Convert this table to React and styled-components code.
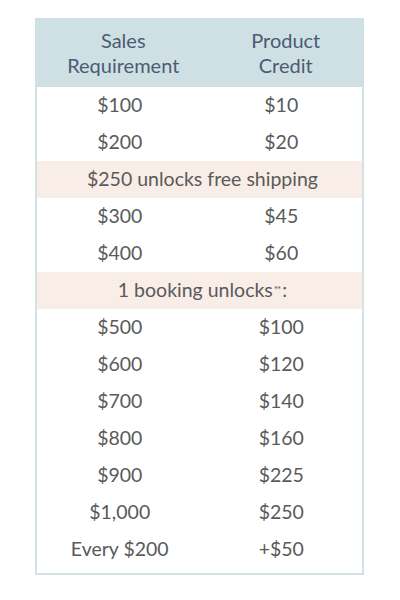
import React from 'react'
import styled, { createGlobalStyle } from 'styled-components'

const GlobalStyle = createGlobalStyle`
    body {
        margin: 0;
        background: #ffffff;
        font-family: Lato, "Open Sans", sans-serif;
    }
`;

const Page = styled.div`
    padding: 18px 36px 0 35px;
`;

const Table = styled.div`
    border: 2px solid #d3e2e7;
    border-top: none;
    padding-bottom: 5px;
`;

const Header = styled.div`
    display: grid;
    grid-template-columns: 1fr 1fr;
    column-gap: 6px;
    background-color: #cfe0e5;
    height: 69px;
    align-items: center;
    padding-left: 10px;
    margin: 0 -2px;
`;

const HeadCell = styled.div`
    text-align: center;
    color: #4b5b72;
    font-size: 20px;
    line-height: 25px;
`;

const Row = styled.div`
    display: grid;
    grid-template-columns: 1fr 1fr;
    height: 37px;
    align-items: center;
    padding-left: 2px;
`;

const Cell = styled.div`
    text-align: center;
    color: #5a5a5a;
    font-size: 19.5px;
    padding-bottom: 3px;
`;

const Band = styled.div`
    height: 37px;
    display: flex;
    align-items: center;
    justify-content: center;
    padding: 0 0 3px 6px;
    box-sizing: border-box;
    background-color: #f8ede7;
    color: #5a5a5a;
    font-size: 19.5px;
`;

const Sup = styled.sup`
    font-size: 10px;
    vertical-align: 9px;
    margin: 0 2px 0 1px;
    letter-spacing: -1px;
`;

const tiers1 = [['$100', '$10'], ['$200', '$20']];
const tiers2 = [['$300', '$45'], ['$400', '$60']];
const tiers3 = [
    ['$500', '$100'],
    ['$600', '$120'],
    ['$700', '$140'],
    ['$800', '$160'],
    ['$900', '$225'],
    ['$1,000', '$250'],
    ['Every $200', '+$50'],
];

const Rows = ({ items }) =>
    items.map(([a, b]) => (
        <Row key={a}>
            <Cell>{a}</Cell>
            <Cell>{b}</Cell>
        </Row>
    ));

const App = () => {
    return (
        <Page>
            <GlobalStyle />
            <Table>
                <Header>
                    <HeadCell>Sales<br />Requirement</HeadCell>
                    <HeadCell>Product<br />Credit</HeadCell>
                </Header>
                <Rows items={tiers1} />
                <Band>$250 unlocks free shipping</Band>
                <Rows items={tiers2} />
                <Band>1 booking unlocks<Sup>**</Sup>:</Band>
                <Rows items={tiers3} />
            </Table>
        </Page>
    )
}

export default App
